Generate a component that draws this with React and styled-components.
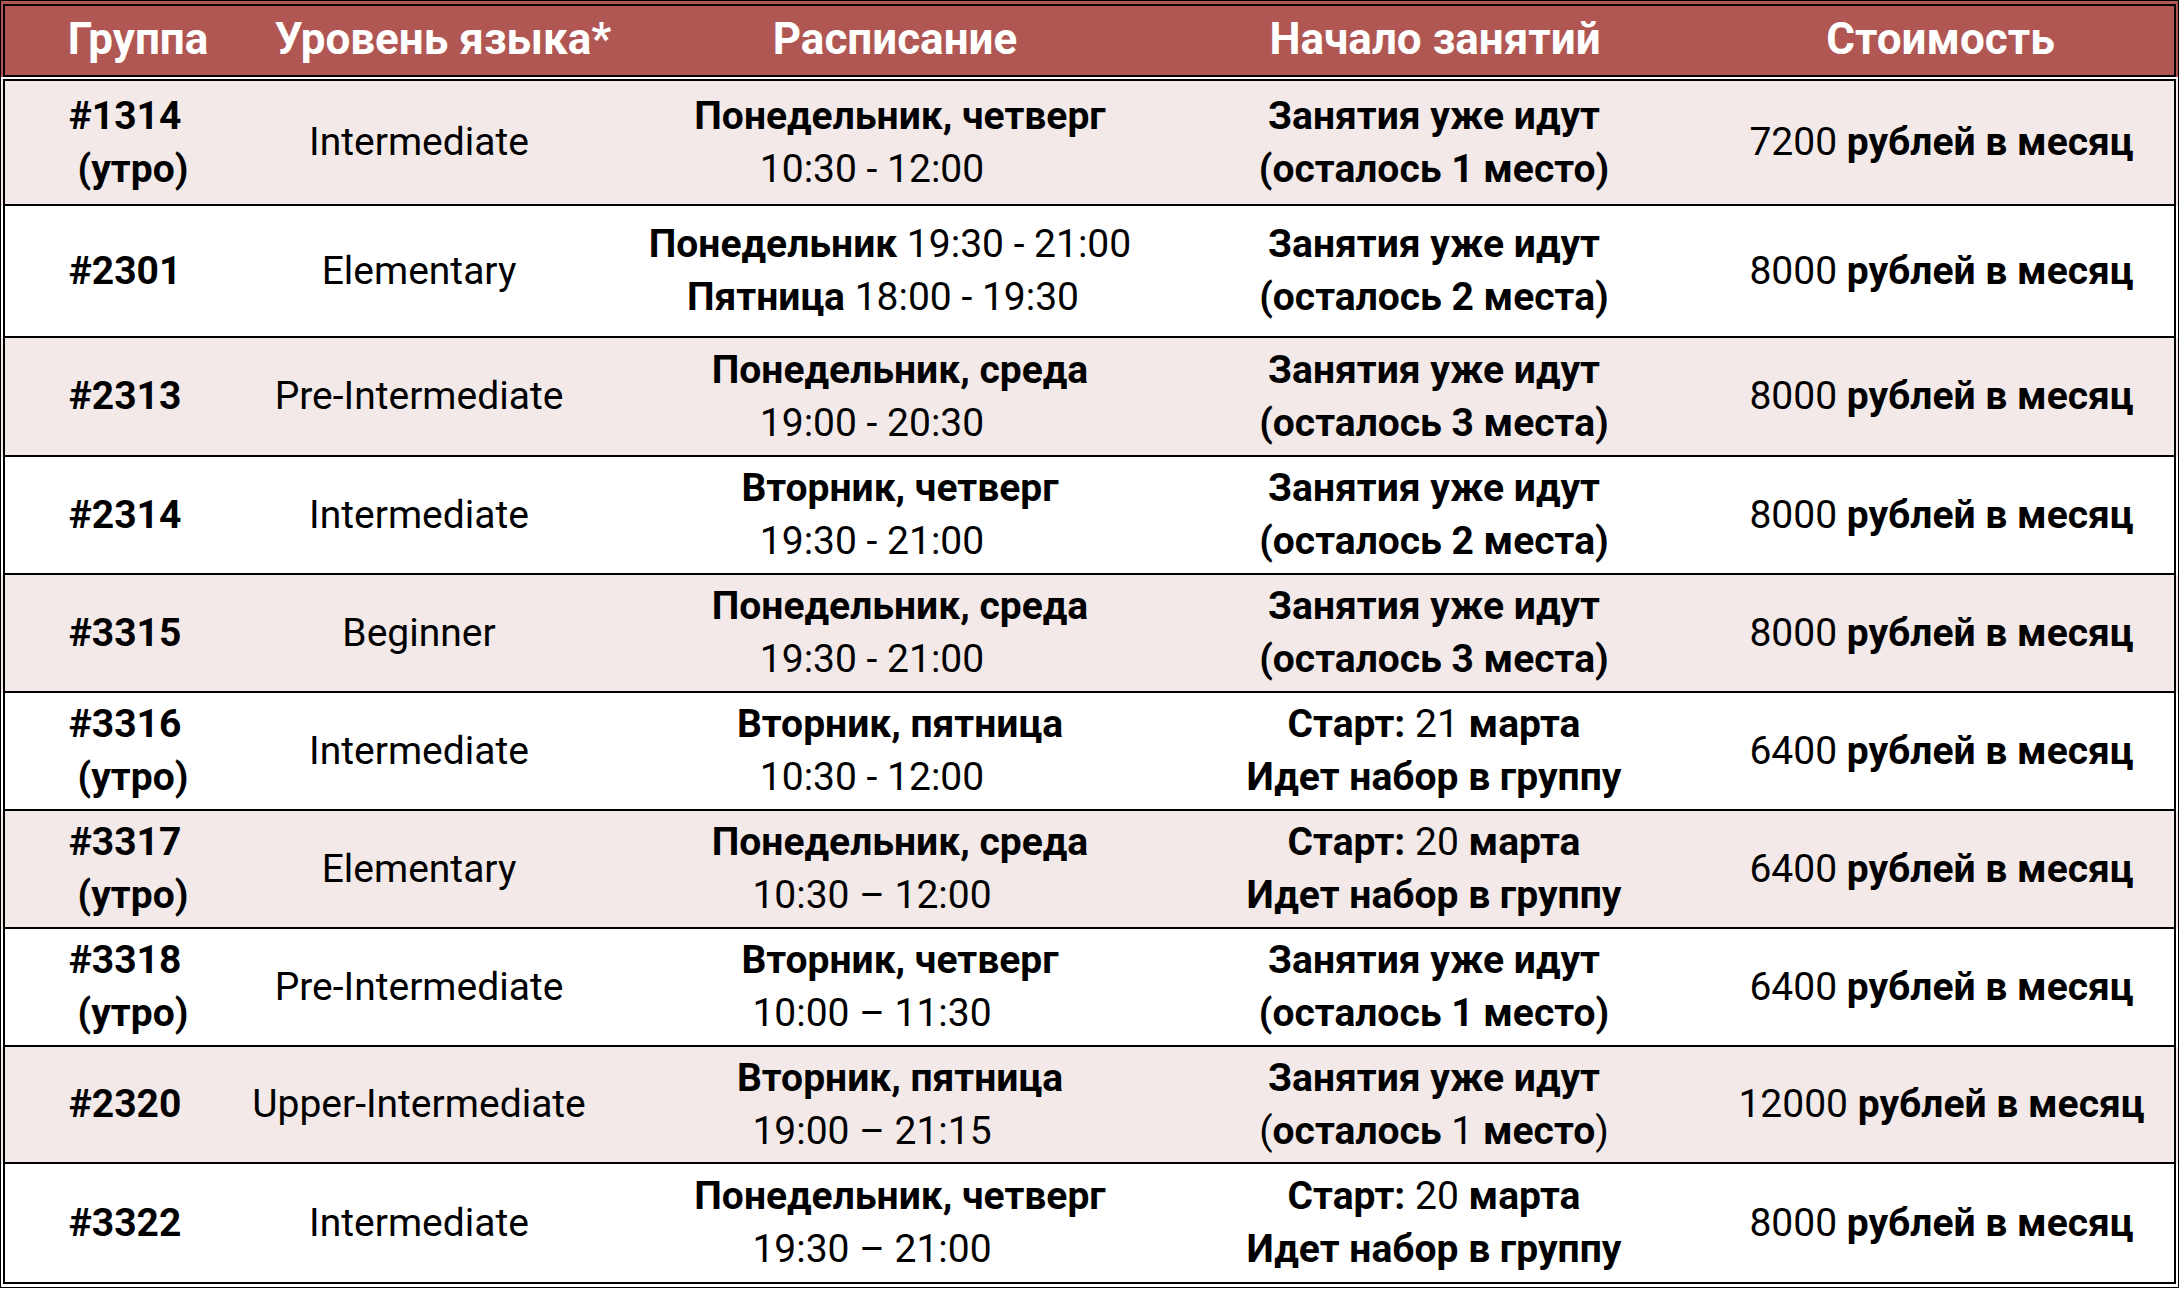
import React from 'react'
import styled, { createGlobalStyle } from 'styled-components'

const GlobalStyle = createGlobalStyle`
  html, body {
    margin: 0;
    padding: 0;
    background: #fff;
  }
  body {
    font-family: Roboto, "Noto Sans", "DejaVu Sans", sans-serif;
    color: #000;
  }
`

const Table = styled.div`
  width: 2179px;
  box-sizing: border-box;
  border: 1px solid #000;
  padding-bottom: 3px;
  background: #fff;
`

const HeaderBand = styled.div`
  background: #b05753;
  padding: 3px 2px 0;
`

const HeaderRow = styled.div`
  display: grid;
  grid-template-columns: 266px 344px 560px 520px 1fr;
  align-items: center;
  height: 73px;
  box-sizing: border-box;
  border: 2px solid #000;
`

const HeaderCell = styled.div`
  color: #fff;
  font-weight: 700;
  font-size: 44px;
  text-align: center;
  white-space: nowrap;
  padding-left: ${p => p.$shift || 0}px;
  padding-bottom: 3px;
`

const Body = styled.div`
  margin-top: 2px;
`

const Row = styled.div`
  background: ${p => (p.$shaded ? '#f2e9e8' : '#fff')};
  padding: 0 2px;
`

const RowInner = styled.div`
  display: grid;
  grid-template-columns: 240px 348px 594px 494px 1fr;
  height: ${p => p.$h}px;
  box-sizing: border-box;
  border-left: 2px solid #000;
  border-right: 2px solid #000;
  border-bottom: 2px solid #000;
  border-top: ${p => (p.$first ? '2px solid #000' : 'none')};
`

const Cell = styled.div`
  display: flex;
  flex-direction: column;
  justify-content: center;
  align-items: center;
  text-align: center;
  white-space: nowrap;
  font-size: 39px;
  line-height: 53px;
  font-weight: ${p => (p.$bold ? 700 : 400)};
  padding-left: ${p => p.$shift || 0}px;
`

// a line inside a cell; $nudge moves it off-centre a little, as in the source table
const Line = styled.div`
  padding-left: ${p => (p.$nudge > 0 ? p.$nudge * 2 : 0)}px;
  padding-right: ${p => (p.$nudge < 0 ? -p.$nudge * 2 : 0)}px;
`

const B = styled.span`
  font-weight: 700;
`

const L = styled.span`
  font-weight: 400;
`

const day = text => ({ node: <B>{text}</B>, nudge: 10 })
const time = text => ({ node: <L>{text}</L>, nudge: -18 })

const rows = [
  {
    h: 127,
    group: ['#1314', '(утро)'],
    level: 'Intermediate',
    sched: [day('Понедельник, четверг'), time('10:30 - 12:00')],
    start: [<B>Занятия уже идут</B>, <B>(осталось 1 место)</B>],
    price: '7200',
  },
  {
    h: 132,
    group: ['#2301'],
    level: 'Elementary',
    sched: [
      { node: <><B>Понедельник</B><L> 19:30 - 21:00</L></>, nudge: 0 },
      { node: <><B>Пятница</B><L> 18:00 - 19:30</L></>, nudge: -7 },
    ],
    start: [<B>Занятия уже идут</B>, <B>(осталось 2 места)</B>],
    price: '8000',
  },
  {
    h: 119,
    group: ['#2313'],
    level: 'Pre-Intermediate',
    sched: [day('Понедельник, среда'), time('19:00 - 20:30')],
    start: [<B>Занятия уже идут</B>, <B>(осталось 3 места)</B>],
    price: '8000',
  },
  {
    h: 118,
    group: ['#2314'],
    level: 'Intermediate',
    sched: [day('Вторник, четверг'), time('19:30 - 21:00')],
    start: [<B>Занятия уже идут</B>, <B>(осталось 2 места)</B>],
    price: '8000',
  },
  {
    h: 118,
    group: ['#3315'],
    level: 'Beginner',
    sched: [day('Понедельник, среда'), time('19:30 - 21:00')],
    start: [<B>Занятия уже идут</B>, <B>(осталось 3 места)</B>],
    price: '8000',
  },
  {
    h: 118,
    group: ['#3316', '(утро)'],
    level: 'Intermediate',
    sched: [day('Вторник, пятница'), time('10:30 - 12:00')],
    start: [<><B>Старт: </B><L>21</L><B> марта</B></>, <B>Идет набор в группу</B>],
    price: '6400',
  },
  {
    h: 118,
    group: ['#3317', '(утро)'],
    level: 'Elementary',
    sched: [day('Понедельник, среда'), time('10:30 – 12:00')],
    start: [<><B>Старт: </B><L>20</L><B> марта</B></>, <B>Идет набор в группу</B>],
    price: '6400',
  },
  {
    h: 118,
    group: ['#3318', '(утро)'],
    level: 'Pre-Intermediate',
    sched: [day('Вторник, четверг'), time('10:00 – 11:30')],
    start: [<B>Занятия уже идут</B>, <B>(осталось 1 место)</B>],
    price: '6400',
  },
  {
    h: 117,
    group: ['#2320'],
    level: 'Upper-Intermediate',
    sched: [day('Вторник, пятница'), time('19:00 – 21:15')],
    start: [
      <B>Занятия уже идут</B>,
      <><L>(</L><B>осталось </B><L>1</L><B> место</B><L>)</L></>,
    ],
    price: '12000',
  },
  {
    h: 120,
    group: ['#3322'],
    level: 'Intermediate',
    sched: [day('Понедельник, четверг'), time('19:30 – 21:00')],
    start: [<><B>Старт: </B><L>20</L><B> марта</B></>, <B>Идет набор в группу</B>],
    price: '8000',
  },
]

export default function App() {
  return (
    <>
      <GlobalStyle />
      <Table>
        <HeaderBand>
          <HeaderRow>
            <HeaderCell>Группа</HeaderCell>
            <HeaderCell>Уровень языка*</HeaderCell>
            <HeaderCell>Расписание</HeaderCell>
            <HeaderCell>Начало занятий</HeaderCell>
            <HeaderCell $shift={12}>Стоимость</HeaderCell>
          </HeaderRow>
        </HeaderBand>
        <Body>
          {rows.map((r, i) => (
            <Row key={i} $shaded={i % 2 === 0}>
              <RowInner $h={r.h} $first={i === 0}>
                <Cell $bold>
                  {r.group.map((g, j) => (
                    <Line key={j} $nudge={j === 1 ? 8 : 0}>{g}</Line>
                  ))}
                </Cell>
                <Cell>{r.level}</Cell>
                <Cell>
                  {r.sched.map((s, j) => (
                    <Line key={j} $nudge={s.nudge}>{s.node}</Line>
                  ))}
                </Cell>
                <Cell>
                  {r.start.map((s, j) => (
                    <Line key={j}>{s}</Line>
                  ))}
                </Cell>
                <Cell $shift={28}>
                  <Line>
                    <L>{r.price}</L>
                    <B> рублей в месяц</B>
                  </Line>
                </Cell>
              </RowInner>
            </Row>
          ))}
        </Body>
      </Table>
    </>
  )
}
